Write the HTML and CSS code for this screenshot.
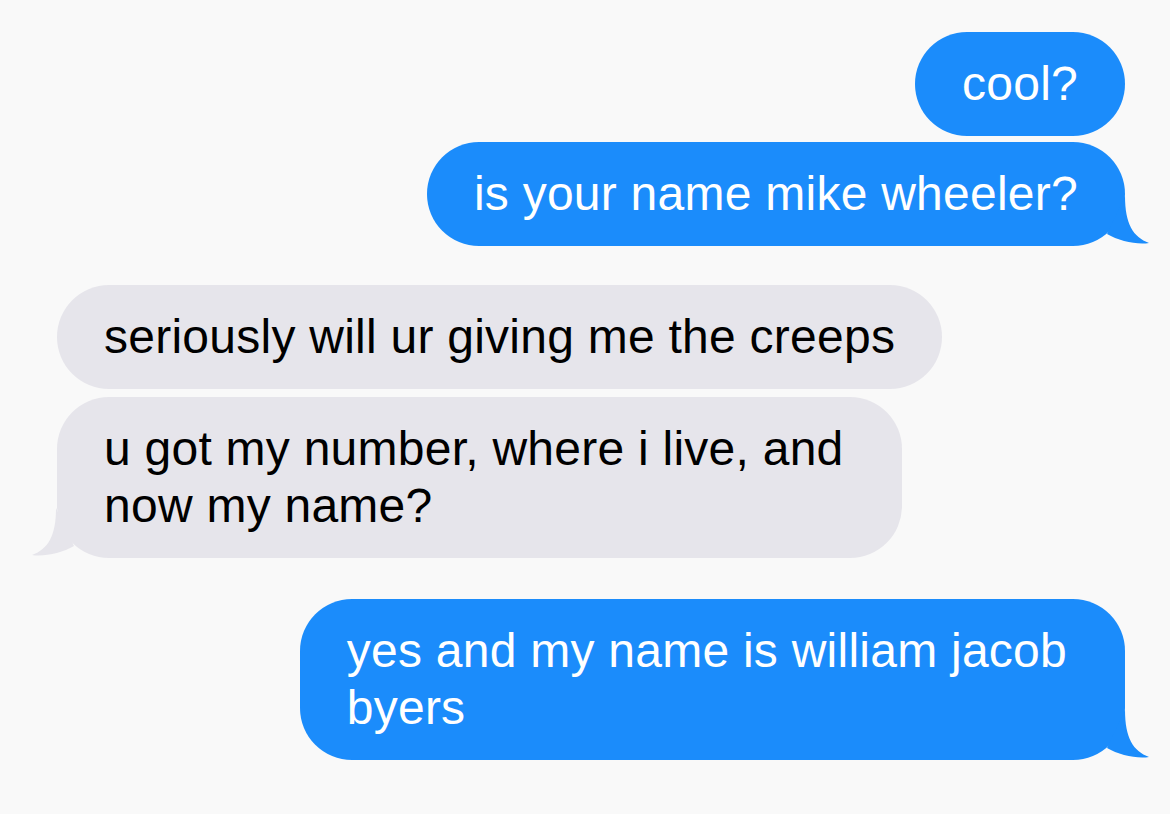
FILE: index.html
```html
<!DOCTYPE html>
<html>
<head>
<meta charset="utf-8">
<link rel="stylesheet" href="styles.css">
</head>
<body>
<div class="thread">
  <div class="msg sent">cool?</div>
  <div class="msg sent tail gap-s">is your name mike wheeler?<svg class="tail-svg" viewBox="0 0 46 50" width="46" height="50"><path d="M22 0 C22 28 30 41 46 47 C34 49 16 45 4 38 Z"/></svg></div>
  <div class="msg recv gap-l">seriously will ur giving me the creeps</div>
  <div class="msg recv tail multi gap-s">u got my number, where i live, and<br>now my name?<svg class="tail-svg" viewBox="0 0 46 50" width="46" height="50"><path d="M24 0 C24 28 16 41 0 47 C12 49 30 45 42 38 Z"/></svg></div>
  <div class="msg sent tail multi gap-l">yes and my name is william jacob<br>byers<svg class="tail-svg" viewBox="0 0 46 50" width="46" height="50"><path d="M22 0 C22 28 30 41 46 47 C34 49 16 45 4 38 Z"/></svg></div>
</div>
</body>
</html>
```

FILE: styles.css
```css
html, body {
  margin: 0;
  padding: 0;
  background: #f9f9f9;
}
.thread {
  display: flex;
  flex-direction: column;
  padding: 32px 45px 0 57px;
  font-family: "Liberation Sans", Arial, sans-serif;
  font-size: 48px;
  line-height: 57px;
  letter-spacing: 0.25px;
}
.msg {
  position: relative;
  padding: 23px 47px 24px 47px;
  border-radius: 52px;
  white-space: nowrap;
}
.msg.multi {
  padding-right: 58px;
}
.sent {
  align-self: flex-end;
  background: #1b8cfb;
  color: #ffffff;
}
.recv {
  align-self: flex-start;
  background: #e6e5eb;
  color: #000000;
}
.gap-s { margin-top: 6px; }
.recv.gap-s { margin-top: 8px; }
.gap-l { margin-top: 39px; }
.sent.gap-l { margin-top: 41px; }
.tail-svg {
  position: absolute;
  bottom: 0;
}
.sent .tail-svg {
  right: -24px;
  fill: #1b8cfb;
}
.recv .tail-svg {
  left: -25px;
  fill: #e6e5eb;
}
```
